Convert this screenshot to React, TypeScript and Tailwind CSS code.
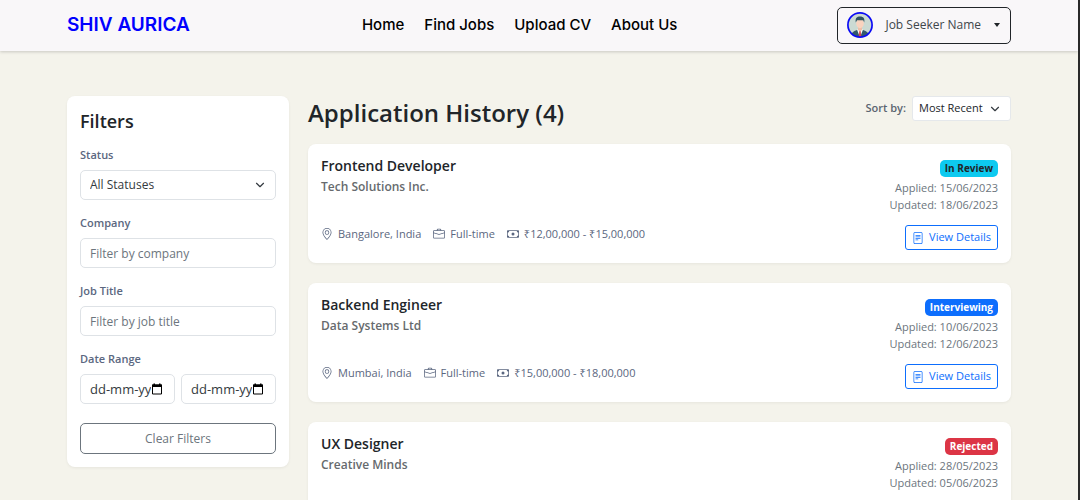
import { BsBriefcase, BsCash, BsFileText, BsGeoAlt } from "react-icons/bs";
import { ChevronDown } from "lucide-react";

const navLinks = ["Home", "Find Jobs", "Upload CV", "About Us"];

const fieldClass =
  "block h-[30px] w-full min-w-0 rounded-[5px] border border-[#dee2e6] bg-white px-[9px] text-[#343a40]";

const labelClass = "mb-2 block text-[11px] leading-[15px] font-semibold text-[#5b6780]";

type Application = {
  title: string;
  company: string;
  location?: string;
  salary?: string;
  status: string;
  badge: string;
  applied: string;
  updated: string;
};

const applications: Application[] = [
  {
    title: "Frontend Developer",
    company: "Tech Solutions Inc.",
    location: "Bangalore, India",
    salary: "₹12,00,000 - ₹15,00,000",
    status: "In Review",
    badge: "bg-[#0dcaf0] text-[#212529]",
    applied: "15/06/2023",
    updated: "18/06/2023",
  },
  {
    title: "Backend Engineer",
    company: "Data Systems Ltd",
    location: "Mumbai, India",
    salary: "₹15,00,000 - ₹18,00,000",
    status: "Interviewing",
    badge: "bg-[#0d6efd] text-white",
    applied: "10/06/2023",
    updated: "12/06/2023",
  },
  {
    title: "UX Designer",
    company: "Creative Minds",
    status: "Rejected",
    badge: "bg-[#dc3545] text-white",
    applied: "28/05/2023",
    updated: "05/06/2023",
  },
];

function Avatar() {
  return (
    <svg viewBox="0 0 26 26" className="h-[26px] w-[26px]" aria-hidden="true">
      <defs>
        <clipPath id="avatar-clip">
          <circle cx="13" cy="13" r="12" />
        </clipPath>
      </defs>
      <g clipPath="url(#avatar-clip)">
        <rect width="26" height="26" fill="#cbdad3" />
        <path d="M3.500 26c0-5 2.500-6.500 6.500-8h6c4 1.500 6.500 3 6.500 8z" fill="#33586b" />
        <path d="M10 17.500l3 8 3-8z" fill="#fff" />
        <path d="M12.300 19h1.400l.6 6h-2.600z" fill="#d64550" />
        <path d="M11 14h4v4l-2 1.500-2-1.500z" fill="#eebfa8" />
        <ellipse cx="13" cy="11.500" rx="3.800" ry="4.700" fill="#f9d3bf" />
        <path d="M8.800 10.500C8 6 10 4.500 13 4.500c3.500 0 5 2 4.200 6l-.9-2.200H10z" fill="#2e5360" />
      </g>
      <circle cx="13" cy="13" r="12.100" fill="none" stroke="#0b0bf5" strokeWidth="1.700" />
    </svg>
  );
}

function DateField({ id, label }: { id: string; label: string }) {
  return (
    <div className="relative">
      <input
        id={id}
        type="text"
        aria-label={label}
        placeholder="dd-mm-yy"
        className={`${fieldClass} text-[13px] placeholder:text-[#343a40]`}
      />
      <svg viewBox="0 0 12 12" className="absolute top-[9px] right-3 h-3 w-3 bg-white" aria-hidden="true">
        <path d="M1.500 2h9v9h-9z" fill="none" stroke="#000" strokeWidth="1" />
        <path d="M1 1.500h10v2.500H1zM2.500 .5H4v2H2.500zM8 .5h1.500v2H8z" fill="#000" />
      </svg>
    </div>
  );
}

function ApplicationCard({ app }: { app: Application }) {
  return (
    <article className="flex justify-between rounded-lg bg-white px-[13px] pt-3 pb-[13px] shadow-[0_1px_3px_rgba(0,0,0,0.06)]">
      <div className="flex flex-col">
        <h2 className="text-[14px] leading-5 font-semibold text-[#212529]">{app.title}</h2>
        <p className="text-[12px] leading-[22px] font-semibold text-[#666a6d]">{app.company}</p>
        {app.location && (
          <ul className="mt-[26px] flex items-center gap-3 text-[11px] leading-5 text-[#5b6780]">
            <li className="flex items-center gap-[5px]">
              <BsGeoAlt className="h-3 w-3" />
              {app.location}
            </li>
            <li className="flex items-center gap-[5px]">
              <BsBriefcase className="h-3 w-3" />
              Full-time
            </li>
            <li className="flex items-center gap-[5px]">
              <BsCash className="h-3 w-3" />
              {app.salary}
            </li>
          </ul>
        )}
      </div>
      <div className="flex flex-col items-end pt-1">
        <span className={`rounded-[5px] px-[5px] text-[10px] leading-[17px] font-bold ${app.badge}`}>{app.status}</span>
        <p className="mt-[2px] text-right text-[11px] leading-[17px] text-[#6c757d]">
          Applied: {app.applied}
          <br />
          Updated: {app.updated}
        </p>
        <button
          type="button"
          className="mt-3 flex h-[25px] items-center gap-[5px] rounded-[3px] border border-[#0d6efd] px-[6px] text-[11px] text-[#0d6efd]"
        >
          <BsFileText className="h-3 w-3" />
          View Details
        </button>
      </div>
    </article>
  );
}

export default function App() {
  return (
    <div className="h-screen overflow-hidden border-r-2 border-[#292929] bg-[#f4f3eb] font-['Open_Sans','Noto_Sans',sans-serif]">
      <header className="bg-[#f9f7f9] px-[67px] shadow-[0_1px_3px_rgba(0,0,0,0.18)]">
        <div className="flex h-[51px] items-center justify-between pb-px">
          <a href="#" className="font-['Inter',sans-serif] text-[19px] font-semibold text-[#0000ff]">
            SHIV AURICA
          </a>
          <nav className="ml-3 flex gap-5 font-['Inter',sans-serif] text-[15px] font-medium text-black">
            {navLinks.map((link) => (
              <a key={link} href="#">
                {link}
              </a>
            ))}
          </nav>
          <button
            type="button"
            className="flex h-[37px] items-center gap-3 rounded-[5px] border border-[#212529] px-[9px] text-[12px] text-[#40464b]"
          >
            <Avatar />
            Job Seeker Name
            <svg viewBox="0 0 8 4" className="h-1 w-2" aria-hidden="true">
              <path d="M1 0h6L4 4z" fill="#212529" />
            </svg>
          </button>
        </div>
      </header>

      <main className="flex items-start gap-[19px] px-[67px] pt-[45px]">
        <aside className="w-[222px] shrink-0 rounded-lg bg-white px-[13px] pt-3 pb-[13px] shadow-[0_1px_3px_rgba(0,0,0,0.06)]">
          <h2 className="mb-[13px] text-[18px] leading-[26px] font-semibold text-[#212529]">Filters</h2>
          <form className="flex flex-col gap-[15px]">
            <div>
              <label htmlFor="status" className={labelClass}>
                Status
              </label>
              <div className="relative">
                <select id="status" className={`${fieldClass} appearance-none text-[12px]`}>
                  <option>All Statuses</option>
                </select>
                <ChevronDown className="pointer-events-none absolute top-2 right-[9px] h-[14px] w-[14px] text-[#343a40]" />
              </div>
            </div>
            <div>
              <label htmlFor="company" className={labelClass}>
                Company
              </label>
              <input
                id="company"
                type="text"
                placeholder="Filter by company"
                className={`${fieldClass} text-[12px] placeholder:text-[#6c757d]`}
              />
            </div>
            <div>
              <label htmlFor="job-title" className={labelClass}>
                Job Title
              </label>
              <input
                id="job-title"
                type="text"
                placeholder="Filter by job title"
                className={`${fieldClass} text-[12px] placeholder:text-[#6c757d]`}
              />
            </div>
            <div>
              <label htmlFor="date-from" className={labelClass}>
                Date Range
              </label>
              <div className="grid grid-cols-2 gap-[6px]">
                <DateField id="date-from" label="From date" />
                <DateField id="date-to" label="To date" />
              </div>
            </div>
            <button
              type="button"
              className="mt-1 h-[31px] rounded-[5px] border border-[#6c757d] text-[12px] text-[#6c757d]"
            >
              Clear Filters
            </button>
          </form>
        </aside>

        <section className="min-w-0 flex-1">
          <div className="flex h-12 items-start justify-between">
            <h1 className="text-[24px] leading-[34px] font-semibold text-[#212529]">Application History (4)</h1>
            <div className="flex items-center gap-[6px]">
              <label htmlFor="sort" className="text-[11px] font-semibold text-[#5b6570]">
                Sort by:
              </label>
              <div className="relative">
                <select
                  id="sort"
                  className="block h-[25px] w-[99px] appearance-none rounded-[3px] border border-[#e5e8eb] bg-white px-[6px] text-[11px] text-[#212529]"
                >
                  <option>Most Recent</option>
                </select>
                <ChevronDown className="pointer-events-none absolute top-[6px] right-[9px] h-[14px] w-[14px] text-[#343a40]" />
              </div>
            </div>
          </div>
          <div className="flex flex-col gap-5">
            {applications.map((app) => (
              <ApplicationCard key={app.title} app={app} />
            ))}
          </div>
        </section>
      </main>
    </div>
  );
}
